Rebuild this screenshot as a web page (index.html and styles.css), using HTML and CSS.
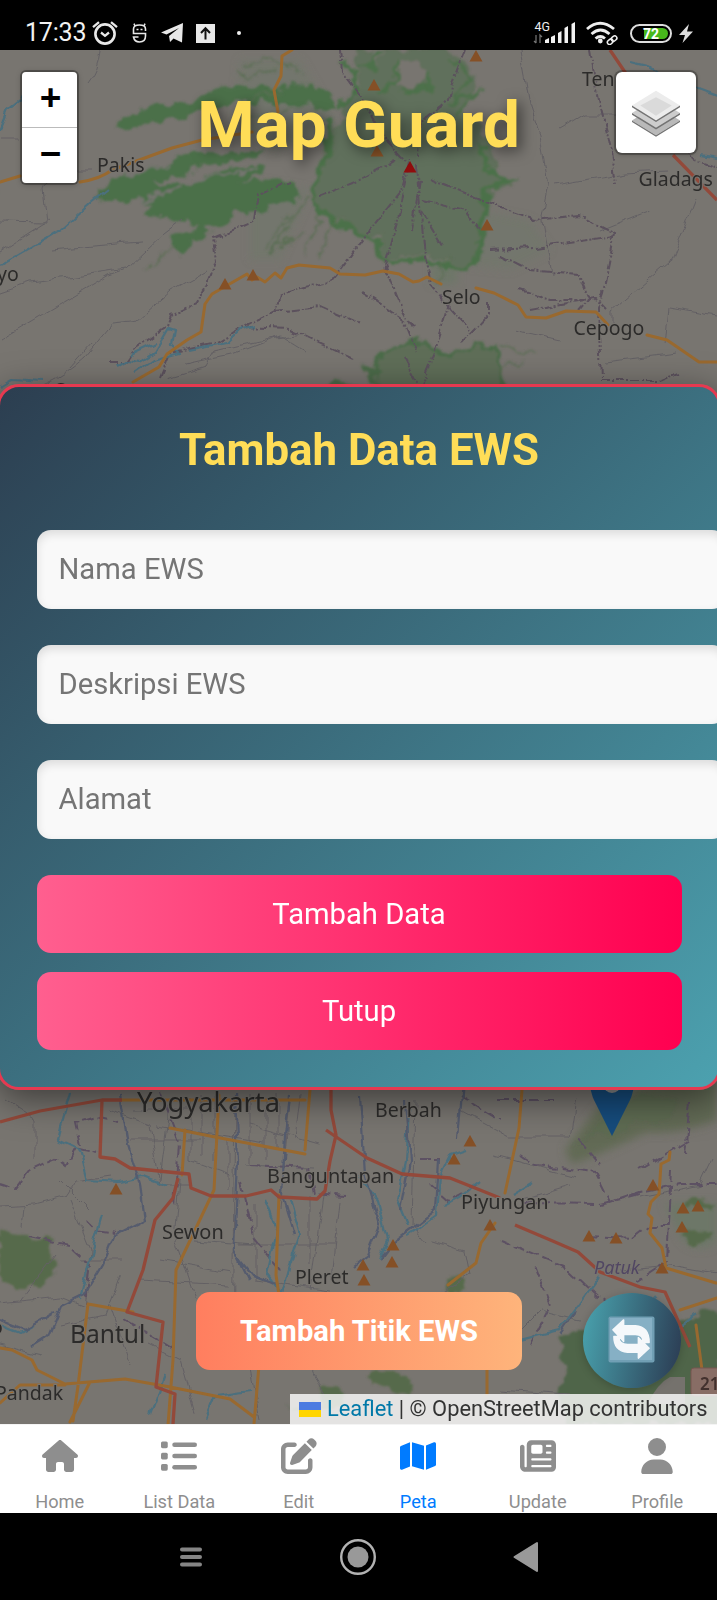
FILE: index.html
```html
<!DOCTYPE html>
<html lang="id">
<head>
<meta charset="utf-8">
<title>Map Guard</title>
<link rel="stylesheet" href="styles.css">
</head>
<body>
<div class="phone">
  <header class="status">
    <span class="clock">17:33</span>
    <svg class="alarm" viewBox="0 0 26 24" fill="none" stroke="#e8e8e8"><circle cx="13" cy="13" r="9.6" stroke-width="2.6"/><path d="M9 11.5l4 3.3 4-3.3" stroke-width="2.3"/><path d="M1 6.2L7 1.2M25 6.2l-6-5" stroke-width="2.3"/></svg>
    <svg class="droid" viewBox="0 0 15 20" fill="none" stroke="#e8e8e8" stroke-width="1.6"><path d="M13.500 8V6q0-4-6-4t-6 4v4.500h12V13q0 6-6 6-5 0-6-5h5M3 3L2 .6M12 3l1-2.4"/><path d="M4.500 6.500h2M8.500 6.500h2"/></svg>
    <svg class="plane" viewBox="0 0 23 20" fill="#e8e8e8"><path d="M0 9.500L22 0l-1 19.500-8.500-4L9 19l-1-6L18 5 5.500 11.500z"/></svg>
    <svg class="upload" viewBox="0 0 19 19"><path fill="#e8e8e8" d="M0 0h19v19H0z"/><path d="M9.500 15.500V4.500M5 9l4.500-4.700L14 9" fill="none" stroke="#111" stroke-width="2"/></svg>
    <i class="dot"></i>
    <span class="grow"></span>
    <svg class="signal" viewBox="0 0 44 24"><text x="1.500" y="9.500" class="net">4G</text><path fill="#f2f2f2" d="M12 19l4-2v5h-4zM18 16l4-2v8h-4zM25 12l3.500-2v12H25zM31.500 7L35 5v17h-3.500zM38.500 3L42 1v21h-3.500z"/><path d="M3 14v8M1 20l2 2M7 22v-8l2 2" stroke="#777" fill="none" stroke-width="1.200"/></svg>
    <svg class="wifi" viewBox="0 0 34 24" fill="none" stroke="#eee" stroke-width="2.800"><path d="M2 8q13-11.500 27 0M6.500 13q9-8 18 0M10.500 17.500q5-4 9.500 0"/><circle cx="15.300" cy="20" r="2.400" fill="#eee" stroke="none"/><g stroke-width="1.500" transform="rotate(-40 27 19)"><rect x="21.500" y="17" width="6" height="4.400" rx="2.200"/><rect x="26.500" y="17" width="6" height="4.400" rx="2.200"/></g></svg>
    <span class="battery"><span class="charge">72</span></span>
    <svg class="bolt" viewBox="0 0 14 19" fill="#ddd"><path d="M10 0L0 11h6L3.500 19 14 7.500H8z"/></svg>
  </header>

  <main class="map">
    <svg class="tiles" viewBox="0 50 717 1374">
      <defs>
        <path id="peak" d="M0-6L6.500 5.500h-13z"/>
        <filter id="forest" x="-5%" y="-5%" width="110%" height="110%"><feTurbulence type="fractalNoise" baseFrequency=".07" numOctaves="3" seed="4"/><feDisplacementMap in="SourceGraphic" scale="17" xChannelSelector="R" yChannelSelector="G"/><feGaussianBlur stdDeviation=".900"/></filter>
        <filter id="haze"><feGaussianBlur stdDeviation="4"/></filter>
        <filter id="winding" x="-5%" y="-5%" width="110%" height="110%"><feTurbulence type="fractalNoise" baseFrequency=".06" numOctaves="2" seed="9"/><feDisplacementMap in="SourceGraphic" scale="9" xChannelSelector="R" yChannelSelector="G"/><feGaussianBlur stdDeviation=".350"/></filter>
      </defs>
      <rect y="50" width="717" height="1374" fill="#787570"/>
      <g filter="url(#haze)" fill="#6d7767">
        <path d="M240 60l60 0 40 70-70 20-35-30z" opacity=".5"/>
        <path d="M480 210l50 10 20 30-40 20-70-8z" opacity=".5"/>
        <path d="M432 262h25v22h-25z"/>
        <path d="M565 1150l35-45 45-20 72-5v40q-40 15-70 12-40 20-75 32z" fill="#626b55"/>
        <path d="M665 1203h52v40q-20 12-35-4z"/>
        <path d="M250 180l60 10-30 70-30 0z" opacity=".5"/>
      </g>
      <g filter="url(#forest)">
        <path d="M354 50l6 22-2 18-18 16 4 14-14 8-2 26-14 28 0 22 20 14 24 14 22 2 4 24 48-2 22 10 22-4 10-30 2-26 6-16 20-6-18-8-4-26-12-24-18-14 12-14 2-16-14-22-24-14z" fill="#61705b"/>
        <path d="M400 62l12-2 16 14-6 12-16 2-12-8zM372 50h10l-4 14z" fill="#787570"/>
        <path d="M400 62l-6 20-14 10M378 50l-4 18-16-4M428 72l0 16-22 8" stroke="#4d714b" stroke-width="4" fill="none"/>
        <path d="M344 60l12 12-2 18-16 18M330 120l-2 36-14 26-2 18 26 24 40 16 4 22 40-2 26 8 26-4 8-32 4-22-2-20 26-10-24-6-2-28" stroke="#4c714a" stroke-width="5" fill="none"/>
        <path d="M452 60l18 20-18 22 24-8-20 22M402 92l26-6" stroke="#4e704b" stroke-width="3" fill="none"/>
      </g>
      <g filter="url(#forest)" fill="#4b704a">
        <path d="M132 116l22-11 28 0 30-13 25-7 30 4 20-5 25 1 15 8 10 16-30-4-38 0-24-6-20 8-26 4-26 8-24 2-20 10-14-3 10-7z"/>
        <path d="M98 199q5-15 25-22l40-12 27-14 22 0 28 2 28-3-12 9-38 4-32 10-35 10 40 2 12-10 35-7 28-2-10 10-18 8 23-6 25 2 15 17-35 12-34 5-13 12-20 1-30-12-25 1 8-15-33 0z"/>
        <path d="M172 235l30-10 10 5-22 15-5 10-12-2z"/>
        <path d="M124 177l46-12M196 178l60-8M140 200l44-12" stroke="#757570" stroke-width="2.500"/>
      </g>
      <g filter="url(#forest)">
        <path d="M378 398q-10-34 4-44 22-10 42-12l10 8q8 8 22 2 32-10 40-2 10 16 2 48z" fill="#5e6e58" stroke="#4c6c49" stroke-width="4"/>
        <path d="M320 388q20-8 40-2l15 12h-55zM362 362l20 8-10 12z" fill="#4b6b48"/>
        <g fill="none" stroke="#5b6e54" stroke-width="1.500"><path d="M145 270l30-22M264 250l26-36 20-18M300 205l-32 50M320 212l-12 44M335 220l-16 34M274 246l30-10M240 66l30-8 30 14M238 76l40-6M245 120l60-14M250 98l30-6M500 348l34 2M500 372l22-12M436 280l16-22"/></g>
      </g>
      <g filter="url(#forest)" fill="#576b4b">
        <path d="M0 1230l35 8 18 5-5 12 8 12-8 19-48 0z"/>
        <path d="M444 1278l12-5 8 10-2 10-17-2z"/>
        <path d="M368 1372h24l20 3-2 20-20-2-8-10-8 3z"/>
        <path d="M560 1338l27-9 40-3 60-2 18-16 16 6v110H566l-7-34 5-14z" fill="#50654a"/>
        <path d="M324 1388l14 2 8 16h-60l35-6z"/>
        <path d="M572 1150l20-18 10 6 20-4 14-14 22 6 20-16-10-14h-30l-40 26z" fill="#596b4f" opacity=".5"/>
        <path d="M687 1208l14-6 12 6M684 1232l14 8 14-4" stroke="#576b4b" stroke-width="7"/>
      </g>
      <path d="M648 1403q10-20 22-26h15v29z" fill="#75726d"/>

      <g filter="url(#winding)">
      <!-- minor roads -->
      <g fill="none" stroke="#636064" stroke-width="1">
        <path d="M100 50q-2 20-12 32M0 222l48 1-4-35 14-30M0 252l50-32M0 340l110-65 17-6 37-35 20-15M0 292l30-10 40-5 57-9M52 250q60-6 90-8M0 398q50-8 85-40l28-34 24-3 34-30 35-20M185 365l46-10 50-19 24 15M70 368l22-25M166 378l40-12 8-15 55-12 35-5"/>
        <path d="M520 50l10 55 10 30 8 50-6 30 10 60M560 130l25-15h60M555 185l70-12 42-2M600 230l50-20M695 200l-25 62-58 50M612 312v10M670 308l47 8M665 345l4-37M605 362l72-9M515 330l45 10M0 140h20M60 170h30"/>
        <path d="M0 1206l35-2 30-8 10-15 35-5M35 1160v-40l-30-20M25 1206l-2 24M70 1200l20 50-5 60M0 1303l60-6 25 10M110 1110l40 15 10 60h30M190 1100v60l40 15M235 1095l-3 260M290 1100l-10 110M250 1125l70 20M140 1280l90 5M235 1308l95 20M130 1365l-20-60M325 1180l-15 110M240 1245h95M180 1180l-5 60 20 60M415 1100l-3 125 12 15M460 1110l50 27h60l6-38M495 1155l80 22M520 1200l50-15M430 1240l35 10 5 25-30 20M520 1330l20-20 40 10M500 1390l70 5M310 1345l40-15M0 1345l40 10M440 1300l-60 0M620 1270l50-5 47 8M640 1197l60-12 12-25"/>
        <path d="M20 1300l35-45M60 1325l45-10 15-40M250 1370l10 50M300 1340l25 60M255 1205v75l75 10M150 1345l30 15 15 55M195 1240l60 5M155 1125l110 18M170 1100l-10 80M215 1095v65M278 1095v55M300 1095l-5 45M245 1165l70 3M160 1260l70 12M132 1110h60M130 1140h70M202 1095v60M228 1140v50M250 1095v70M266 1100v60M310 1195v70M340 1200l-8 80M60 1180l30 30M80 1260l40 0"/>
      </g>
      <!-- boundaries -->
      <g fill="none" stroke="#5b515d" stroke-width="2" stroke-dasharray="9 2 2 2">
        <path d="M110 362l15 0 10-14 32-22 4-10 25-12 12-20 8-22-3-24 12-5 28-12 4-28 35-12M320 196l35-14 40-22M340 50l2 22 16 22 30 50 18 18"/>
        <path d="M160 378l10-25 50-12 25-16 30-14 5-16 25-8 25-5 32-42 40-50 8-30M275 311l45-5 40 18M245 327l45 2 62 30"/>
        <path d="M465 50l-12 30-5 20-28 22-2 35M410 165l-12 55-14 50M416 165l9 90 5 30 40 45M420 180l-8 50M430 180l50 20 55 20 45-5 35 18-12 60-5 15 3 70M424 200l40 10 16 20M422 212l20 34M490 250l45-2 80-12M500 255l30 15 50 5 10 25-10 12M520 290l30 10h35M530 310l65-12 12 12M360 292l25 15 20 15 12 30M450 300l-15 50M385 265l18 45 10 18M460 345l28-30 0-14M600 380h60l20-8M590 50l5 30 5 25 10 40 5 40M685 140l10 20 22 8M404 358l14 26M436 352l-14 34"/>
      </g>
      <g fill="none" stroke="#5d5163" stroke-width="2" stroke-dasharray="11 4">
        <path d="M0 1185l15 5 15-20 25-12 10 8 10-18 22 5M80 1145l-5-22 20-6 22 5M85 1220l10 10 20 3M30 1238l40 8 20 18-5 40M250 1165l60 3 5 25 30 3M240 1180l15 60 25 30M520 1155l15 10 60 7 15 30 30-10 40-8 60 0M430 1185l18 16 30-16M525 1203l75 1 40-10M588 1236l45 2 15-12 25 0M500 1240l70 30 42 40M530 1345l20-40-15-40M580 1140l20 25M685 1155l5-55M672 1170l-5 90-30 20M160 1090l20 55-5 60M125 1320l50 30M460 1095l40 25M498 1100h60M640 1170l50-30M420 1160h20"/>
      </g>
      <!-- rivers -->
      <g fill="none" stroke="#4c6f7e" stroke-width="2.200" stroke-linejoin="round">
        <path d="M0 130l8-20 15-12 7-18M0 265l30-17 30-18 30-26 20-16" />
        <path d="M117 366l10-6 12 2 15-10 14-24 6 2-3 15 8 8-25 7-20 14M130 355l25-12M188 350l40-8 12-12 15-4M0 386l12-7 30 2M630 62l20 5 20 14 20 4 27 10M700 155l17 3"/>
        <path d="M70 1090l-12 50 22 10 8 30 30 2 25-5 25 10M265 1200l12 30-10 45 15 20 8-30 10-30-10-35M357 1175l20 25 10 40-8 20M410 1100l-5 60-8 40 10 25M445 1205l15-8 20-15M465 1150l-15 5-10 20-3 40-30 20M512 1195l20-12M500 1345l60-15 40-55M590 1335l40-15 25-25M80 1300l12-50 10-35M0 1325l20 8 15-8M150 1415l15-40M205 1420l10-25 35-5M660 1340l35-25"/>
      </g>
      <g fill="none" stroke="#555b6e" stroke-width="2.200">
        <path d="M120 1095l8 50 12 40 5 35-30 15-12 30-18 30-25 12-12 30-16 10M235 1095l3 65-4 90 15 30M290 1095l-5 40-3 60 12 40M360 1095l5 80 15 50-12 30-15 12M463 1080l-5 60M438 1160l-3 50-40 30-15 20M0 1320l25 10 30-18M240 1260l12 15 25 10M405 1100l5 60-10 50M560 1335l16-24"/>
      </g>
      </g>
      <!-- main roads -->
      <g fill="none" stroke="#99692f" stroke-width="3" stroke-linejoin="round" stroke-linecap="round">
        <path d="M292 50l-10 6-1 20-7 14 4 22M0 182l20-6M80 182q20-3 32-12l60-22 30-8 50-8M133 382l26-15 8-13 20-14 14-8 4-28 7-10 35-20 5 6 5-3 8 5 10-9 6 5 6-10 12-3 31 3 10 6 25 1 18-4 16 3 14 8 6-1 8-4 14 7M476 288l18 5 24 12 8 12 20 1 20-7 30 1 12 13M647 335l20 5 32 22h18"/>
        <path d="M120 1100h185M185 1130l-3 45M170 1128l45 9 90 17M219 1095l-5 95-38 80-3 90-5 65M310 1090l-5 60M279 1195l-3 80 3 20M522 1090l-3 38-14 65M670 1152l-1 8-8 4-2 30-8 8-3 12 4 4-2 15 12 15 4 20 50 15M88 1304l45 8M88 1304l-10 82-5 35M0 1348l12 2 20 10 5 10 28 14 60-5 45 8 60 12 24 18M90 1382l-20 40M487 1370v24M0 1403l20-18h45M259 1365l-5 59M680 1310l37-12M495 1223l-14 20-5 20-28 22M696 1325l6 45" />
      </g>
      <g fill="none" stroke="#93493a" stroke-width="3.300" stroke-linejoin="round">
        <path d="M610 50l23 34M673 155l44 45M0 1122l40-11 62-11h20M102 1100l-2 57 15 2 15 9 48 5 11 1 2 14 20 8h35l25-6 8 7 38 2 8-8 5-30 6-26-5-25v-25M326 1130l41 28 35 16 48 4 50 20M178 1178l-5 20-18 22-12 50-16 42 36 10-7 65 19 7-2 30M515 1225l40 17 23 10 22 20 40 15 25 5 25 55"/>
      </g>
      <g class="labels">
        <text x="97" y="171.500">Pakis</text><text x="582" y="86">Ten</text><text x="638.500" y="186">Gladags</text>
        <text x="-3" y="281">yo</text><text x="-11" y="198">o</text><text x="442" y="303.500">Selo</text><text x="573.500" y="335">Cepogo</text><text x="55" y="397">S</text>
        <text class="city" x="137" y="1112">Yogyakarta</text><text x="375" y="1116.500">Berbah</text><text class="wide" x="267" y="1183">Banguntapan</text>
        <text class="wide" x="162" y="1238.500">Sewon</text><text class="wide" x="461" y="1209">Piyungan</text><text x="295" y="1284">Pleret</text>
        <text class="city town" x="70" y="1343">Bantul</text><text x="-5" y="1400">Pandak</text><text class="patuk" x="594" y="1274">Patuk</text><text x="-9" y="1334">o</text>
      </g>
      <rect x="691" y="1368" width="40" height="28" rx="3" fill="#886d65" stroke="#765750"/><text class="shield" x="700" y="1390">21</text>
      <g fill="#855026">
        <use href="#peak" x="374" y="85"/><use href="#peak" x="476" y="56"/><use href="#peak" x="377" y="151"/><use href="#peak" x="225" y="284"/><use href="#peak" x="253" y="275"/><use href="#peak" x="487" y="225"/>
        <use href="#peak" x="116" y="1189"/><use href="#peak" x="470" y="1141"/><use href="#peak" x="454" y="1159"/><use href="#peak" x="653" y="1185"/><use href="#peak" x="683" y="1208"/><use href="#peak" x="698" y="1206"/><use href="#peak" x="682" y="1227"/><use href="#peak" x="490" y="1225"/><use href="#peak" x="589" y="1236"/><use href="#peak" x="616" y="1238"/><use href="#peak" x="393" y="1245"/><use href="#peak" x="392" y="1262"/><use href="#peak" x="662" y="1268"/><use href="#peak" x="363" y="1265"/><use href="#peak" x="364" y="1280"/>
      </g>
      <use href="#peak" x="410" y="167" fill="#900d0d"/>
      <path d="M589 1080h46q-2 14-5 20l-18 36-18-36q-3-6-5-20z" fill="#164c7d"/><circle cx="612" cy="1084" r="9" fill="#8a8a8a"/>
    </svg>

    <h1 class="title">Map Guard</h1>
    <div class="zoom"><button>+</button><button>−</button></div>
    <button class="layers"><svg viewBox="0 0 26 26"><path fill="#b9b9b9" d="M0 17l13-8 13 8-13 8z"/><path fill="#737373" d="M0 17v.900l13 8 13-8V17l-13 8z"/><path fill="#cdcdcd" d="M0 13l13-8 13 8-13 8z"/><path fill="#737373" d="M0 13v.900l13 8 13-8V13l-13 8z"/><path fill="#ececec" d="M0 9l13-8 13 8-13 8z"/><path fill="#dadada" d="M4.500 9L13 4.500 21.500 9 13 14.500z"/><path fill="#737373" d="M0 9v.900l13 8 13-8V9l-13 8z"/></svg></button>

    <button class="add">Tambah Titik EWS</button>
    <button class="refresh"><svg viewBox="0 0 48 48"><rect x=".500" y=".500" width="47" height="47" rx="2" fill="#719fb4"/><path d="M2 2h43v43H2z" fill="#86b0c5"/><path fill="#f5f8fb" stroke="#f5f8fb" stroke-width="1.500" stroke-linejoin="round" d="M5 14L16 4v6h12q14 1 14 17h-6q0-8-8-8H16v7zM42 33L31 43v-6H20Q6 36 6 21h5q0 8 9 8h11v-7z"/></svg></button>
    <div class="credit"><i class="flag"></i><span><a>Leaflet</a> | © OpenStreetMap contributors</span></div>

    <form class="modal">
      <h2>Tambah Data EWS</h2>
      <input placeholder="Nama EWS">
      <input placeholder="Deskripsi EWS">
      <input placeholder="Alamat">
      <button type="button">Tambah Data</button>
      <button type="button">Tutup</button>
    </form>
  </main>

  <nav class="tabs">
    <a><svg viewBox="0 0 576 512"><path d="M575.800 255.500c0 18-15 32.100-32 32.100h-32l.700 160.200V472c0 22.100-17.900 40-40 40H392c-22.100 0-40-17.900-40-40V384c0-17.700-14.300-32-32-32H256c-17.700 0-32 14.300-32 32v88c0 22.100-17.900 40-40 40H104c-22.100 0-40-17.900-40-40V287.600H32c-18 0-32-14-32-32.100 0-9 3-17 10-24L266.400 8c7-7 15-8 22-8s15 2 21 7L564.800 231.500c8 7 12 15 11 24z"/></svg>Home</a>
    <a><svg viewBox="0 0 512 512"><rect y="48" width="96" height="96" rx="22"/><rect y="208" width="96" height="96" rx="22"/><rect y="368" width="96" height="96" rx="22"/><rect x="160" y="64" width="352" height="64" rx="32"/><rect x="160" y="224" width="352" height="64" rx="32"/><rect x="160" y="384" width="352" height="64" rx="32"/></svg>List Data</a>
    <a><svg viewBox="0 0 512 512"><path d="M471.600 21.700c-21.900-21.900-57.300-21.900-79.200 0L362.300 51.700l97.900 97.900 30.100-30.100c21.900-21.900 21.900-57.300 0-79.200L471.600 21.700zm-299.200 220c-6.100 6.100-10.800 13.600-13.500 21.900l-29.600 88.800c-2.900 8.600-.600 18.100 5.800 24.600s15.900 8.700 24.600 5.800l88.800-29.600c8.200-2.700 15.700-7.400 21.900-13.500L437.700 172.300 339.700 74.300 172.400 241.700zM96 64C43 64 0 107 0 160V416c0 53 43 96 96 96H352c53 0 96-43 96-96V320c0-17.700-14.300-32-32-32s-32 14.300-32 32v96c0 17.700-14.300 32-32 32H96c-17.700 0-32-14.300-32-32V160c0-17.700 14.300-32 32-32h96c17.700 0 32-14.300 32-32s-14.300-32-32-32H96z"/></svg>Edit</a>
    <a class="active"><svg viewBox="0 0 576 512"><path d="M384 476.100L192 421.200V35.900L384 90.800V476.100zm32-1.200V88.400L543.100 37.500c15.800-6.300 32.900 5.300 32.900 22.300V394.600c0 9.800-6 18.600-15.100 22.300L416 474.800zM15.100 95.100L160 37.200V423.600L32.900 474.500C17.100 480.800 0 469.200 0 452.200V117.400c0-9.800 6-18.600 15.100-22.300z"/></svg>Peta</a>
    <a><svg viewBox="0 0 512 512"><path d="M96 96c0-35.300 28.700-64 64-64H448c35.300 0 64 28.700 64 64V416c0 35.300-28.700 64-64 64H80c-44.200 0-80-35.800-80-80V128c0-17.700 14.300-32 32-32s32 14.300 32 32V400c0 8.800 7.200 16 16 16s16-7.200 16-16V96zm64 24v80c0 13.300 10.700 24 24 24H296c13.300 0 24-10.700 24-24V120c0-13.300-10.700-24-24-24H184c-13.300 0-24 10.700-24 24zm208-8c0 8.800 7.200 16 16 16h48c8.800 0 16-7.200 16-16s-7.200-16-16-16H384c-8.800 0-16 7.200-16 16zm0 96c0 8.800 7.200 16 16 16h48c8.800 0 16-7.200 16-16s-7.200-16-16-16H384c-8.800 0-16 7.200-16 16zM160 304c0 8.800 7.200 16 16 16H432c8.800 0 16-7.200 16-16s-7.200-16-16-16H176c-8.800 0-16 7.200-16 16zm0 96c0 8.800 7.200 16 16 16H432c8.800 0 16-7.200 16-16s-7.200-16-16-16H176c-8.800 0-16 7.200-16 16z"/></svg>Update</a>
    <a><svg viewBox="0 0 448 512"><path d="M224 256A128 128 0 1 0 224 0a128 128 0 1 0 0 256zm-45.700 48C79.800 304 0 383.800 0 482.300C0 498.700 13.300 512 29.700 512H418.300c16.400 0 29.700-13.300 29.700-29.700C448 383.800 368.200 304 269.700 304H178.300z"/></svg>Profile</a>
  </nav>

  <footer class="system">
    <svg class="recent" viewBox="0 0 22 20" stroke="#858585" stroke-width="4" stroke-linecap="round"><path d="M2 2.500h18M2 10h18M2 17.500h18"/></svg>
    <svg class="homekey" viewBox="0 0 36 36"><circle cx="18" cy="18" r="16.800" fill="none" stroke="#b2b2b2" stroke-width="2.400"/><circle cx="18" cy="18" r="10.500" fill="#999"/></svg>
    <svg class="back" viewBox="0 0 26 32"><path d="M1.500 16L24 2v28z" fill="#999" stroke="#999" stroke-width="2" stroke-linejoin="round"/></svg>
  </footer>
</div>
</body>
</html>
```
FILE: styles.css
```css
* { box-sizing: border-box; }
body { margin: 0; background: #000; font-family: Roboto, "Liberation Sans", sans-serif; }
button, input { font: inherit; border: 0; }
.phone { width: 717px; height: 1600px; display: flex; flex-direction: column; overflow: hidden; }

.status { height: 50px; padding: 16px 24px 0 25px; display: flex; align-items: center; background: #000; color: #f2f2f2; }
.clock { width: 62px; font-size: 25px; line-height: 34px; letter-spacing: -.2px; }
.alarm { width: 26px; height: 24px; margin-left: 5px; }
.droid { width: 15px; height: 20px; margin-left: 14px; }
.plane { width: 23px; height: 20px; margin-left: 14px; }
.upload { width: 19px; height: 19px; margin-left: 12px; }
.dot { width: 4px; height: 4px; margin-left: 22px; border-radius: 50%; background: #eee; }
.grow { flex: 1; }
.signal { width: 44px; height: 24px; margin-right: 8px; }
.net { font-size: 12.500px; fill: #eee; }
.wifi { width: 34px; height: 24px; margin-right: 11px; }
.battery { width: 42px; height: 19px; margin-right: 7px; padding: 2px; border: 2px solid #ddd; border-radius: 10px; }
.charge { display: block; height: 11px; border-radius: 6px; background: linear-gradient(90deg, #000 28%, #47b81c 28%); color: #fff; font-size: 14px; font-weight: 700; line-height: 12px; text-align: center; }
.bolt { width: 14px; height: 19px; }

.map { flex: 1; position: relative; overflow: hidden; }
.tiles { display: block; width: 717px; height: 1374px; }
.labels { font-family: "Noto Sans", sans-serif; font-size: 19.500px; fill: #2c2b2a; stroke: #787570; stroke-width: 2px; paint-order: stroke; }
.labels .wide { font-size: 19.900px; }
.labels .city { font-size: 27.300px; }
.labels .town { font-size: 24.600px; }
.labels .patuk { font-size: 18px; font-style: italic; fill: #514663; }
.shield { font: 600 17px "Noto Sans", sans-serif; fill: #42302d; }

.title { position: absolute; top: 36px; left: 0; right: 0; margin: 0; text-align: center; font-size: 65.600px; line-height: 78px; color: #ffdd57; text-shadow: 4px 4px 14px rgba(0,0,0,.55); }
.zoom { position: absolute; left: 22px; top: 22px; width: 55px; border-radius: 4px; box-shadow: 0 0 0 2px rgba(0,0,0,.3), 0 1px 6px rgba(0,0,0,.3); overflow: hidden; }
.zoom button { display: block; width: 55px; height: 55px; padding: 0 0 4px 2px; background: #fff; color: #000; font: 700 37px/50px "Liberation Sans", sans-serif; }
.zoom button + button { height: 56px; border-top: 1px solid #bbb; }
.layers { position: absolute; left: 616px; top: 22px; width: 80px; height: 81px; padding: 0; display: grid; place-items: center; background: #fff; border-radius: 6px; box-shadow: 0 0 0 2px rgba(0,0,0,.25), 0 1px 5px rgba(0,0,0,.3); }
.layers svg { width: 48px; height: 48px; }

.add { position: absolute; left: 196px; top: 1242px; width: 326px; height: 78px; padding: 0; border-radius: 14px; background: linear-gradient(90deg, #ff7e5f, #feb47b); color: #fff; font-size: 29.200px; font-weight: 700; }
.refresh { position: absolute; left: 583px; top: 1243px; width: 98px; height: 95px; padding: 0 2px 2px 0; display: grid; place-items: center; border-radius: 50%; background: linear-gradient(100deg, #489fab 5%, #2c3e55 95%); box-shadow: 0 2px 8px rgba(0,0,0,.2); }
.refresh svg { width: 47px; height: 47px; }
.credit { position: absolute; right: 0; bottom: 0; width: 427px; height: 30px; padding: 0 9px; display: flex; align-items: center; gap: 6px; background: rgba(255,255,255,.8); color: #333; font-size: 21.850px; line-height: 28px; white-space: nowrap; }
.credit a { color: #0078a8; }
.flag { flex: none; width: 22px; height: 15px; background: linear-gradient(#4c7be1 50%, #ffd500 50%); }

.modal { position: absolute; left: -3.500px; top: 334px; width: 724px; height: 706px; padding: 35px 36px 0 37px; border: 3px solid #e63950; border-radius: 22px; background: linear-gradient(135deg, #2c3e50, #4ca1af); box-shadow: 0 9px 36px rgba(0,0,0,.5); display: flex; flex-direction: column; }
.modal h2 { margin: 0 0 52px; text-align: center; font-size: 43.800px; line-height: 56px; color: #ffdd57; }
.modal input { flex: none; width: 689px; height: 78.500px; margin-bottom: 36.500px; padding: 0 22px; border-radius: 14px; background: #f9f9f9; box-shadow: inset 0 4px 10px rgba(0,0,0,.12); font-size: 29.200px; }
.modal input::placeholder { color: #757575; }
.modal button { flex: none; height: 78px; margin-bottom: 19px; padding: 0; border-radius: 14px; background: linear-gradient(90deg, #ff5f8f, #ff0050); color: #fff; font-size: 29.200px; }

.tabs { height: 89px; display: grid; grid-template-columns: repeat(6, 1fr); background: #fff; border-top: 1px solid #f4f4f4; }
.tabs a { padding-top: 13px; display: flex; flex-direction: column; align-items: center; gap: 17px; color: #8e8e8e; font-size: 18.200px; line-height: 22px; }
.tabs svg { width: 36px; height: 36px; fill: currentColor; }
.tabs .active { color: #007bff; }

.system { height: 87px; display: flex; align-items: center; background: #000; padding-left: 180px; }
.recent { width: 22px; height: 20px; margin-right: 138px; }
.homekey { width: 36px; height: 36px; margin-right: 137px; }
.back { width: 26px; height: 32px; }
```
